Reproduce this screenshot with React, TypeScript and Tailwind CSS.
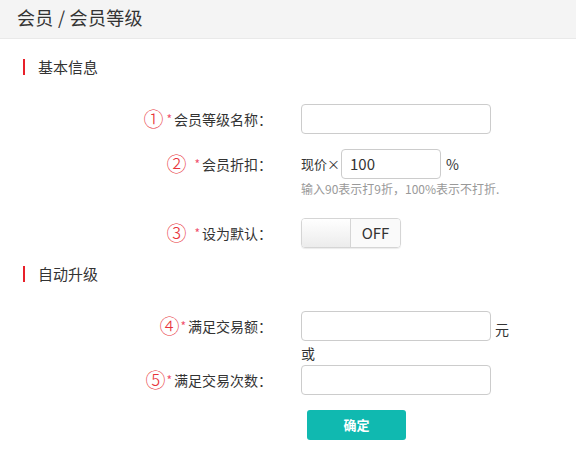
import React from "react";

const font = { fontFamily: '"Noto Sans CJK SC", "Liberation Sans", sans-serif' };

function Label({ num, text, gap = "gap-[5px]" }: { num: string; text: string; gap?: string }) {
  return (
    <div className={`flex w-[272px] shrink-0 items-center justify-end ${gap}`}>
      <span className="text-[20px] font-light leading-[18px] text-[#e8333a]">{num}</span>
      <span className="flex items-center">
        <span className="mr-[2px] text-[12px] leading-[12px] text-[#f0506e]">*</span>
        <span className="text-[14px] leading-[18px] text-[#333]">{text}</span>
      </span>
    </div>
  );
}

function Field({ w = "w-[190px]", value = "" }: { w?: string; value?: string }) {
  return (
    <div
      className={`flex h-[30px] ${w} shrink-0 items-center rounded-[4px] border border-[#cccccc] bg-white px-[8px] text-[15px] text-[#333]`}
    >
      {value}
    </div>
  );
}

function SectionTitle({ title }: { title: string }) {
  return (
    <div className="flex h-[16px] items-center pl-[23px]">
      <div className="h-[16px] w-[2px] bg-[#e8202a]" />
      <span className="ml-[13px] text-[15px] leading-[16px] text-[#333]">{title}</span>
    </div>
  );
}

export default function App() {
  return (
    <div className="h-[466px] w-[576px] overflow-hidden bg-white" style={font}>
      <div className="flex h-[39px] items-center border-b border-[#e9e9e9] bg-[#f4f4f4] pl-[17px] pb-[4px] text-[18px] tracking-[0.3px] text-[#333]">
        会员 / 会员等级
      </div>

      <div className="mt-[20px]">
        <SectionTitle title="基本信息" />
      </div>

      <div className="mt-[29px] flex items-center gap-[29px]">
        <Label num="①" text="会员等级名称：" gap="gap-[3px]" />
        <Field />
      </div>

      <div className="mt-[15px] flex items-center gap-[29px]">
        <Label num="②" text="会员折扣：" gap="gap-[8px]" />
        <div className="flex items-center">
          <span className="mr-[1px] text-[13px] text-[#333]">现价×</span>
          <Field w="w-[100px]" value="100" />
          <span className="ml-[5px] text-[14px] text-[#333]">%</span>
        </div>
      </div>
      <div className="mt-[2px] pl-[301px] text-[12px] leading-[16px] text-[#999]">
        输入90表示打9折，100%表示不打折.
      </div>

      <div className="mt-[21px] flex items-center gap-[29px]">
        <Label num="③" text="设为默认：" gap="gap-[8px]" />
        <div className="flex h-[30px] w-[100px] overflow-hidden rounded-[4px] border border-[#d5d5d5] shadow-[0_1px_1px_rgba(0,0,0,0.08)]">
          <div className="h-full w-[49px] border-r border-[#d5d5d5] bg-gradient-to-b from-white to-[#ececec]" />
          <div className="flex flex-1 items-center justify-center bg-[#fafafa] text-[15px] text-[#333]">
            OFF
          </div>
        </div>
      </div>

      <div className="mt-[18px]">
        <SectionTitle title="自动升级" />
      </div>

      <div className="mt-[29px] flex items-center gap-[29px]">
        <Label num="④" text="满足交易额：" gap="gap-[1px]" />
        <div className="flex items-center">
          <Field />
          <span className="ml-[4px] mt-[6px] text-[14px] text-[#333]">元</span>
        </div>
      </div>

      <div className="mt-[3px] pl-[301px] text-[14px] leading-[18px] text-[#333]">或</div>

      <div className="mt-[3px] flex items-center gap-[29px]">
        <Label num="⑤" text="满足交易次数：" gap="gap-[1px]" />
        <Field />
      </div>

      <div className="mt-[15px] pl-[307px]">
        <button className="flex h-[30px] w-[99px] items-center justify-center rounded-[3px] bg-[#10b9b0] text-[13px] font-bold text-white">
          确定
        </button>
      </div>
    </div>
  );
}
